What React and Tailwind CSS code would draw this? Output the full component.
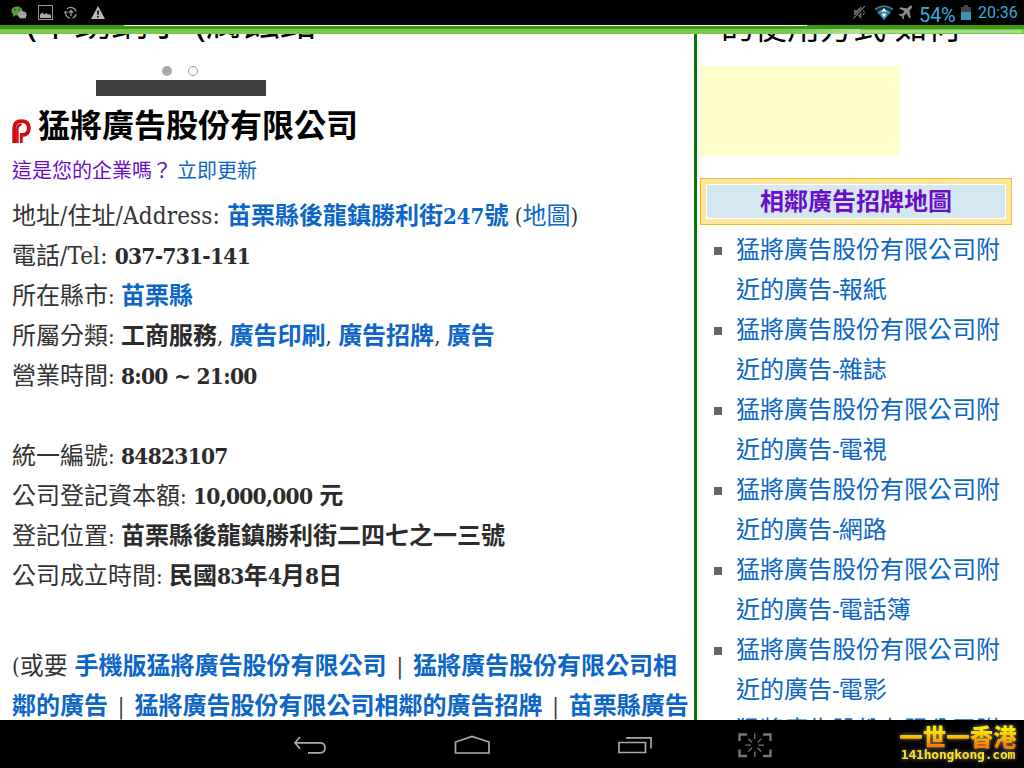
import React from "react";

const CJK = "font-['Noto_Sans','Noto_Sans_CJK_TC',sans-serif]";
const LINK = "text-[#0b66c8]";

const nearby = ["報紙", "雜誌", "電視", "網路", "電話簿", "電影"];

// Latin text and digits inside the Chinese lines
function Latin({ children, className = "text-[22px]" }) {
  return (
    <span
      className={`font-['DejaVu_Serif_Condensed','DejaVu_Serif',serif] leading-none whitespace-pre ${className}`}
    >
      {children}
    </span>
  );
}

function Word({ children }) {
  return <Latin className="text-[24px] tracking-[0.17px]">{children}</Latin>;
}

function Num({ children }) {
  return <Latin className="text-[22.5px] tracking-[-0.75px]">{children}</Latin>;
}

function Bar() {
  return <Latin className="inline-block w-[26.4px] text-center text-[22px]">|</Latin>;
}

function Row({ children }) {
  return <div className="h-10 leading-10 whitespace-pre">{children}</div>;
}

function B({ children, link }) {
  return <b className={link ? "text-[#0b66c8]" : "text-[#2b2b2b]"}>{children}</b>;
}

function StatusBar() {
  return (
    <div className="h-[25px] shrink-0 bg-black flex items-center justify-between pl-[11px] pr-[6px]">
      <div className="flex items-center">
        <svg width="17" height="14" viewBox="0 0 17 14">
          <ellipse cx="6" cy="5" rx="5.6" ry="4.6" fill="#5c9a3c" />
          <path d="M2.5 8 L2 11 L5 9 Z" fill="#5c9a3c" />
          <circle cx="4" cy="3.8" r=".8" fill="#1d3a10" />
          <circle cx="8" cy="3.8" r=".8" fill="#1d3a10" />
          <ellipse cx="11.3" cy="8.8" rx="4.3" ry="3.6" fill="#aaa" />
          <path d="M13 11 L15 13 L14.5 10 Z" fill="#aaa" />
          <circle cx="9.8" cy="7.8" r=".6" fill="#555" />
          <circle cx="12.8" cy="7.8" r=".6" fill="#555" />
        </svg>
        <svg className="ml-[10px]" width="15" height="15" viewBox="0 0 15 15">
          <rect x=".5" y=".5" width="14" height="14" fill="none" stroke="#999" />
          <path d="M2 13 V9.5 L4.5 7.5 L6.5 9.5 L8.5 8 L10 9.5 L11.5 9 L13 10.5 V13 Z" fill="#aaa" />
        </svg>
        <svg className="ml-[11px]" width="14" height="14" viewBox="0 0 14 14" fill="none" stroke="#999" strokeWidth="1.3">
          <path d="M3 3 A5.3 5.3 0 0 1 12 5.5 M12.2 8 A5.3 5.3 0 0 1 8.5 12 M5.8 12.1 A5.3 5.3 0 0 1 1.7 6" />
          <path d="M7 10 V5 M4.8 6.8 L7 4.5 L9.2 6.8" />
          <path d="M0 7.5 L1.7 5 L3.8 7.2" strokeWidth="1" />
        </svg>
        <svg className="ml-[13px]" width="14" height="13" viewBox="0 0 14 13">
          <path d="M7 0 L14 13 H0 Z" fill="#bbb" />
          <path d="M6.2 4.5 H7.8 V8.8 H6.2 Z M6.2 10 H7.8 V11.5 H6.2 Z" fill="#000" />
        </svg>
      </div>
      <div className="flex items-center text-[#35aedb]">
        <svg width="13" height="15" viewBox="0 0 13 15">
          <path d="M1 5 H4 L8.5 1 V14 L4 10 H1 Z" fill="#666" />
          <path d="M10.5 5 Q12 7.5 10.5 10" stroke="#777" fill="none" />
          <path d="M0 14.5 L12.5 1" stroke="#000" strokeWidth="2.4" />
          <path d="M.5 13.5 L12 1" stroke="#888" strokeWidth="1.1" />
        </svg>
        <svg className="ml-[8px]" width="20" height="15" viewBox="0 0 20 15">
          <path d="M.8 4.5 Q10 -2.6 19.2 4.5 L10 15 Z" fill="#12303c" />
          <path d="M1 4.4 Q10 -2.4 19 4.4" stroke="#4a8194" strokeWidth="1.6" fill="none" />
          <path d="M3.4 7.2 Q10 2 16.6 7.2 L10 15 Z" fill="#3795b8" />
          <path d="M5.6 9.6 Q10 6.4 14.4 9.6" stroke="#12303c" strokeWidth=".8" fill="none" />
          <path d="M10 3 L12.6 6.5 H7.4 Z M10 12.3 L12.6 8.4 H7.4 Z" fill="#fff" />
        </svg>
        <svg className="ml-[4px]" width="15" height="15" viewBox="0 0 15 15">
          <path
            d="M13.8 .8 Q12.8 .1 11.5 1.3 L9.3 3.4 L2.4 2.2 L1.2 3.4 L6.6 6.2 L4 9.1 L1.5 8.8 L.5 9.8 L3.6 11.2 L5 14.4 L6 13.4 L5.8 10.9 L8.6 8.3 L11.4 13.6 L12.6 12.4 L11.4 5.6 L13.4 3.4 Q14.6 2 13.8 .8 Z"
            fill="#8c8c8c"
          />
        </svg>
        <span className="ml-[6px] mt-[5px] w-[37px] font-[Roboto,sans-serif] text-[20px] leading-none tracking-[-0.3px]">54%</span>
        <svg className="ml-[5px]" width="10" height="15" viewBox="0 0 10 15">
          <path d="M3 0 H7 V2 H10 V7 H0 V2 H3 Z" fill="#444" />
          <rect y="7" width="10" height="8" fill="#3a93b8" />
        </svg>
        <span className="ml-[7px] w-[40px] whitespace-nowrap font-[Roboto,sans-serif] text-base leading-none">20:36</span>
      </div>
    </div>
  );
}

function NavBar() {
  return (
    <div className="relative h-12 shrink-0 bg-black">
      <div className="flex h-full pl-[292px] pt-[12px]">
        <svg width="35" height="24" viewBox="0 0 35 24" fill="none" stroke="#aaa" strokeWidth="1.7">
          <path d="M8 5 L3 10.8 L8 16.8 M3.5 10.8 H28 Q33 10.8 33 15.7 Q33 20.8 28 20.8 H16" />
        </svg>
        <svg className="ml-[126px]" width="38" height="24" viewBox="0 0 38 24" fill="none" stroke="#aaa" strokeWidth="1.7">
          <path d="M2.5 21 V10 L19 4.5 L36 10 V21 Z" />
        </svg>
        <svg className="ml-[126px]" width="36" height="24" viewBox="0 0 36 24" fill="none" stroke="#aaa" strokeWidth="1.7">
          <path d="M2 10.5 H28.5 V20.5 H2 Z M9 5.8 H34 V16.5" />
        </svg>
        <svg className="ml-[83px]" width="36" height="27" viewBox="0 0 36 27" fill="none" stroke="#777">
          <path d="M3.5 9 V2.5 H11 M27 2.5 H34.5 V9 M34.5 17.5 V24 H27 M11 24 H3.5 V17.5" strokeWidth="2.4" />
          <path d="M18.8 1.5 V7 M18.8 19.5 V25 M9.5 13.2 H15 M22.5 13.2 H28 M12.3 6.8 L16 10.4 M25.3 6.8 L21.6 10.4 M12.3 19.6 L16 16 M25.3 19.6 L21.6 16" strokeWidth="1.3" />
        </svg>
      </div>
      <div className="absolute left-[897px] top-[2px] w-[122px] text-center font-bold drop-shadow-[0_0_2px_#888]">
        <div className="bg-linear-to-b from-[#ffe600] from-30% to-[#ff7a00] to-85% bg-clip-text text-transparent font-['Noto_Sans_CJK_TC',sans-serif] font-black text-[23.5px] leading-[28px] whitespace-nowrap">
          一世一香港
        </div>
        <div className="-mt-[3px] text-[#ffe11a] font-['DejaVu_Sans_Mono',monospace] text-[13px] leading-[15px] tracking-[-0.2px]">
          141hongkong.com
        </div>
      </div>
    </div>
  );
}

function Company() {
  return (
    <main className="w-[694px] shrink-0 pl-3 overflow-hidden text-2xl text-[#333]">
      <div className="h-8 overflow-hidden">
        <div className="-mt-[32px] ml-[14px] text-[37px] leading-[40px] text-black font-normal whitespace-pre">(不銹鋼字 (腐蝕銘</div>
      </div>
      <div className="flex gap-4 pl-[150px]">
        <i className="size-[10px] rounded-full bg-[#a8a8a8]" />
        <i className="size-[10px] rounded-full border border-[#999]" />
      </div>
      <div className="mt-1 ml-[84px] h-4 w-[170px] bg-[#3f3f3f]" />
      <h1 className="mt-[5px] flex h-12 items-center text-[32px] font-bold text-black whitespace-nowrap">
        <svg className="mt-[12px] mr-[7px]" width="19" height="26" viewBox="0 0 19 26" fill="none">
          <path d="M2.2 25 V10.5 Q2.2 3.2 9.6 3.2 Q16.8 3.2 16.8 10 Q16.8 17 10.5 17 H8.8 V25" stroke="#d00c0c" strokeWidth="3.8" />
          <path d="M5.4 25 V11 Q5.4 6.8 9.6 6.8" stroke="#d00c0c" strokeWidth="2.6" />
          <path d="M7.4 25 V11.5 Q7.4 7.8 10 7.8 Q12.5 7.8 12.5 10.4 Q12.5 13 10.2 13" stroke="#fff" strokeWidth="1" />
        </svg>
        猛將廣告股份有限公司
      </h1>
      <div className="flex h-[46px] pt-[6px] gap-[5px] text-[20px] leading-8">
        <span className="text-[#6a0cc8]">這是您的企業嗎？</span>
        <span className={LINK}>立即更新</span>
      </div>
      <Row>
        地址<Word>/</Word>住址<Word>/Address: </Word>
        <B link>苗栗縣後龍鎮勝利街<Latin>247</Latin>號</B>
        <Latin> (</Latin><span className={LINK}>地圖</span><Latin>)</Latin>
      </Row>
      <Row>電話<Word>/Tel: </Word><B><Num>037-731-141</Num></B></Row>
      <Row>所在縣市<Latin>: </Latin><B link>苗栗縣</B></Row>
      <Row>
        所屬分類<Latin>: </Latin><B>工商服務</B><Latin>, </Latin><B link>廣告印刷</B>
        <Latin>, </Latin><B link>廣告招牌</B><Latin>, </Latin><B link>廣告</B>
      </Row>
      <Row>營業時間<Latin>: </Latin><B><Num>8:00 ~ 21:00</Num></B></Row>
      <Row> </Row>
      <Row>統一編號<Latin>: </Latin><B><Num>84823107</Num></B></Row>
      <Row>公司登記資本額<Latin>: </Latin><B><Num>10,000,000</Num><Latin> </Latin>元</B></Row>
      <Row>登記位置<Latin>: </Latin><B>苗栗縣後龍鎮勝利街二四七之一三號</B></Row>
      <Row>公司成立時間<Latin>: </Latin><B>民國<Num>83</Num>年<Num>4</Num>月<Num>8</Num>日</B></Row>
      <div className="mt-[50px]">
        <Row>
          <Latin>(</Latin>或要<Latin className="text-[24px]"> </Latin><B link>手機版猛將廣告股份有限公司</B>
          <Bar /><B link>猛將廣告股份有限公司相</B>
        </Row>
        <Row>
          <B link>鄰的廣告</B><Bar />
          <B link>猛將廣告股份有限公司相鄰的廣告招牌</B>
          <Bar /><B link>苗栗縣廣告</B>
        </Row>
      </div>
    </main>
  );
}

function Sidebar() {
  return (
    <aside className="flex-1 border-l-[3px] border-[#087808] pl-[3px] overflow-hidden">
      <div className="h-8 overflow-hidden">
        <div className="-mt-[27px] ml-[21px] text-[33px] leading-[40px] text-black whitespace-pre">的使用方式 如何</div>
      </div>
      <div className="h-[90px] w-[200px] bg-[#ffffcc]" />
      <div className="mt-[22px] h-[47px] w-[312px] border border-[#f0bd2e] bg-[#fde69c] p-[5px]">
        <h2 className="flex h-full items-center justify-center border border-white bg-[#d3e8f0] pb-[2px] text-2xl font-bold text-[#6a0cc8]">
          相鄰廣告招牌地圖
        </h2>
      </div>
      <ul className="mt-[4px] pl-[14px]">
        {nearby.map((name) => (
          <li key={name} className="flex">
            <i className="mt-[18px] mr-[14px] size-2 shrink-0 bg-[#666]" />
            <span className="w-[272px] text-2xl leading-10 text-[#0b66c8]">
              猛將廣告股份有限公司附<br />近的廣告<span className="tracking-[-1px]">-</span>{name}
            </span>
          </li>
        ))}
        <li className="pl-[22px] text-2xl leading-10 text-[#0b66c8] whitespace-nowrap">猛將廣告股份有限公司附</li>
      </ul>
    </aside>
  );
}

export default function App() {
  return (
    <div className={`flex h-[768px] w-[1024px] flex-col overflow-hidden bg-white ${CJK}`}>
      <StatusBar />
      <div className="flex h-px shrink-0 bg-[#3a9a10]">
        <div className="ml-[124px] w-[683px] bg-[#e8f5e0]" />
      </div>
      <div className="h-[3px] shrink-0 bg-[#3d980f]" />
      <div className="flex h-[5px] shrink-0 bg-[#78c850]">
        <div className="ml-[790px] w-[70px] bg-linear-to-r from-[#78c850] to-[#b4e39c]" />
        <div className="my-px w-[162px] rounded-r bg-[#a5dc8a]" />
      </div>
      <div className="flex min-h-0 flex-1">
        <Company />
        <Sidebar />
      </div>
      <NavBar />
    </div>
  );
}
